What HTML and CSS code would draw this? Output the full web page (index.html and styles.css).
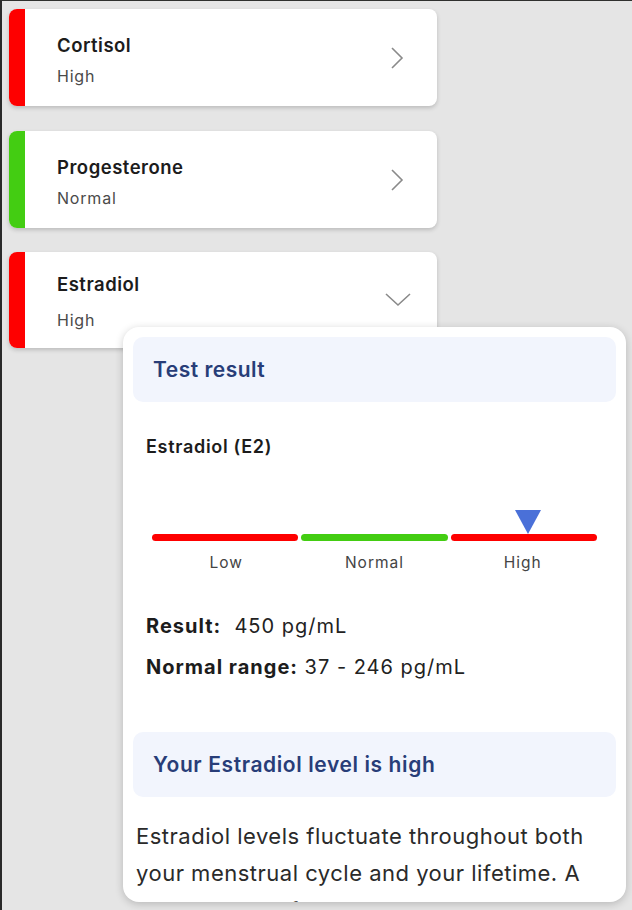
FILE: index.html
```html
<!DOCTYPE html>
<html>
<head>
<meta charset="utf-8">
<link rel="stylesheet" href="styles.css">
</head>
<body>
<div class="screen">
  <div class="list">
    <div class="card">
      <div class="accent red"></div>
      <div class="card-text">
        <div class="card-title">Cortisol</div>
        <div class="card-sub">High</div>
      </div>
      <svg class="chev" width="16" height="24" viewBox="0 0 16 24"><path d="M3 2 L13 12 L3 22" fill="none" stroke="#8a8a8a" stroke-width="1.6"/></svg>
    </div>
    <div class="card">
      <div class="accent green"></div>
      <div class="card-text">
        <div class="card-title">Progesterone</div>
        <div class="card-sub">Normal</div>
      </div>
      <svg class="chev" width="16" height="24" viewBox="0 0 16 24"><path d="M3 2 L13 12 L3 22" fill="none" stroke="#8a8a8a" stroke-width="1.6"/></svg>
    </div>
    <div class="card card-open">
      <div class="accent red"></div>
      <div class="card-text">
        <div class="card-title">Estradiol</div>
        <div class="card-sub">High</div>
      </div>
      <svg class="chev-down" width="26" height="16" viewBox="0 0 26 16"><path d="M1 3 L13 14 L25 3" fill="none" stroke="#8a8a8a" stroke-width="1.6"/></svg>
    </div>
  </div>

  <div class="popup">
    <div class="section-head">Test result</div>
    <div class="hormone">Estradiol (E2)</div>
    <div class="gauge">
      <div class="marker"></div>
      <div class="bars">
        <div class="seg red"></div>
        <div class="seg green"></div>
        <div class="seg red"></div>
      </div>
      <div class="labels">
        <span>Low</span><span>Normal</span><span>High</span>
      </div>
    </div>
    <div class="values">
      <div class="val"><b>Result:</b>&nbsp; 450 pg/mL</div>
      <div class="val"><b>Normal range:</b> 37 - 246 pg/mL</div>
    </div>
    <div class="section-head second">Your Estradiol level is high</div>
    <p class="desc">Estradiol levels fluctuate throughout both your menstrual cycle and your lifetime. A common yet often unknown reason why es</p>
  </div>
</div>
</body>
</html>
```
FILE: styles.css
```css
* { box-sizing: border-box; }
html, body { margin: 0; padding: 0; }
body {
  background: #e5e5e5;
  font-family: "Inter", "Open Sans", sans-serif;
  color: #1e1e1e;
}
.screen {
  position: relative;
  width: 632px;
  height: 910px;
  overflow: hidden;
  border-top: 1px solid #2f302e;
  border-left: 2px solid #2a2a2a;
  padding: 8px 0 0 7px;
}
.list {
  display: flex;
  flex-direction: column;
  gap: 25px;
  width: 428px;
}
.card {
  height: 97px;
  background: #fff;
  border-radius: 8px;
  display: flex;
  align-items: center;
  box-shadow: 0 2px 4px rgba(0,0,0,0.18);
  overflow: hidden;
}
.card-open { height: 96px; margin-top: -1px; }
.accent { width: 16px; align-self: stretch; }
.red { background: #fe0000; }
.green { background: #43cd12; }
.card-text {
  flex: 1;
  padding-left: 32px;
  padding-top: 4px;
  display: flex;
  flex-direction: column;
  gap: 10px;
}
.card-open .card-text { gap: 15px; padding-top: 2px; }
.card-title { font-size: 18.5px; line-height: 22px; font-weight: 600; letter-spacing: 0.5px; color: #1c1c1c; }
.card-sub { font-size: 16px; line-height: 20px; letter-spacing: 0.8px; color: #4a4a4a; }
.chev { margin-right: 32px; }
.chev-down { margin-right: 26px; margin-top: -2px; }

.popup {
  position: absolute;
  left: 121px;
  top: 326px;
  width: 503px;
  height: 575px;
  background: #fff;
  border-radius: 16px;
  box-shadow: 0 2px 8px rgba(0,0,0,0.2);
  padding: 10px 10px 0 10px;
  overflow: hidden;
}
.section-head {
  height: 65px;
  background: #f2f5fd;
  border-radius: 10px;
  display: flex;
  align-items: center;
  padding-left: 20px;
  font-size: 21px;
  font-weight: 600;
  letter-spacing: 0.5px;
  color: #283d78;
}
.hormone {
  margin: 34px 0 0 13px;
  font-size: 18px;
  line-height: 22px;
  letter-spacing: 0.7px;
  font-weight: 600;
  color: #1c1c1c;
}
.gauge {
  position: relative;
  margin: 76px 19px 0 19px;
}
.bars {
  display: flex;
  gap: 3px;
}
.seg { flex: 1; height: 7px; border-radius: 4px; }
.marker {
  position: absolute;
  left: 363px;
  top: -24px;
  width: 0; height: 0;
  border-left: 13px solid transparent;
  border-right: 13px solid transparent;
  border-top: 24px solid #4a70d8;
}
.labels {
  display: flex;
  margin-top: 12px;
}
.labels span {
  flex: 1;
  text-align: center;
  font-size: 15.5px;
  line-height: 20px;
  letter-spacing: 1px;
  color: #444;
}
.values {
  margin: 41px 0 0 13px;
  display: flex;
  flex-direction: column;
  gap: 17px;
  font-size: 20px;
  line-height: 24px;
  letter-spacing: 1px;
  color: #222;
}
.val b { font-weight: 700; color: #1c1c1c; }
.second { margin-top: 53px; letter-spacing: 0.6px; }
.desc {
  margin: 21px 0 0 3px;
  font-size: 22px;
  line-height: 37px;
  letter-spacing: 0.5px;
  color: #2a2a2a;
}
```
